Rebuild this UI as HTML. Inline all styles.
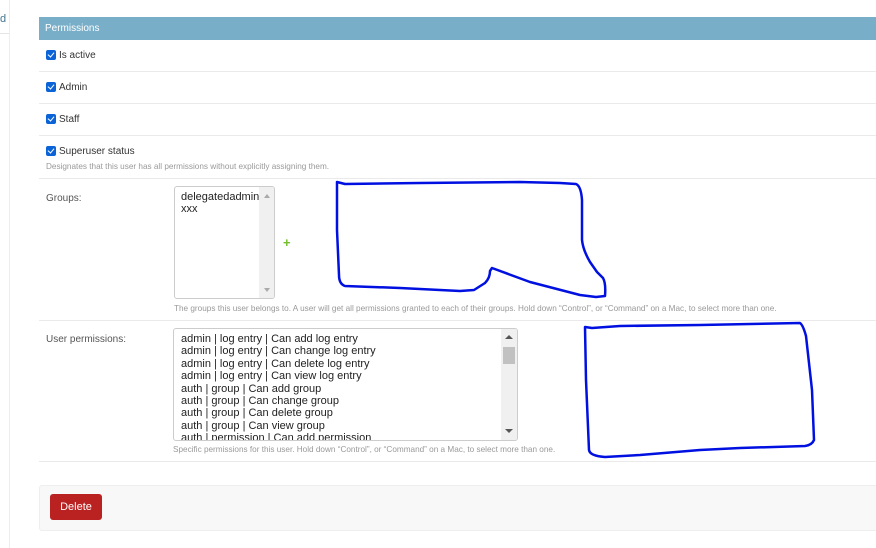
<!DOCTYPE html>
<html><head><meta charset="utf-8"><style>
body{margin:0;width:876px;height:548px;background:#fff;font-family:"Liberation Sans",Arial,sans-serif;position:relative;overflow:hidden;color:#333}
.a{position:absolute}
.t{font-size:11px;color:#333}
.h{font-size:8.2px;color:#999;white-space:nowrap}
.line{position:absolute;left:39px;right:0;height:1px;background:#eaeaea}
.cb{position:absolute;width:10px;height:10px;background:#0b63d8;border-radius:2px}
.cb:after{content:"";position:absolute;left:3px;top:1px;width:3px;height:5px;border:solid #fff;border-width:0 1.5px 1.5px 0;transform:rotate(40deg)}
.opt{font-size:11px;line-height:12.4px;color:#222;white-space:nowrap}
</style></head><body>
<div class="a" style="left:0;top:0;width:9px;height:548px;border-right:1px solid #eee"></div>
<div class="a" style="left:0;top:33px;width:9px;height:1px;background:#e5e5e5"></div>
<div class="a t" style="left:0;top:13px;color:#417690">d</div>

<div class="a" style="left:39px;top:17px;width:837px;height:23px;background:#79aec8"></div>
<div class="a" style="left:45px;top:23px;font-size:10px;color:#fff">Permissions</div>

<div class="cb" style="left:46px;top:50px"></div><div class="a t" style="left:59px;top:50px;font-size:10px">Is active</div>
<div class="line" style="top:71px"></div>
<div class="cb" style="left:46px;top:82px"></div><div class="a t" style="left:59px;top:82px;font-size:10px">Admin</div>
<div class="line" style="top:103px"></div>
<div class="cb" style="left:46px;top:114px"></div><div class="a t" style="left:59px;top:114px;font-size:10px">Staff</div>
<div class="line" style="top:135px"></div>
<div class="cb" style="left:46px;top:146px"></div><div class="a t" style="left:59px;top:146px;font-size:10px">Superuser status</div>
<div class="a h" style="left:46px;top:162px">Designates that this user has all permissions without explicitly assigning them.</div>
<div class="line" style="top:178px"></div>

<div class="a t" style="left:46px;top:193px;font-size:10px;color:#555">Groups:</div>
<div class="a" style="left:174px;top:186px;width:99px;height:111px;border:1px solid #ccc;border-radius:3px;overflow:hidden">
 <div class="a opt" style="left:6px;top:4px">delegatedadmin<br>xxx</div>
 <div class="a" style="right:0;top:0;width:15px;height:111px;background:#f0f0f0"></div>
 <div class="a" style="right:4px;top:7px;border:3.5px solid transparent;border-bottom:4px solid #aaa;border-top:0"></div>
 <div class="a" style="right:4px;top:101px;border:3.5px solid transparent;border-top:4px solid #aaa;border-bottom:0"></div>
</div>
<div class="a" style="left:283px;top:235px;color:#70bf2b;font-weight:bold;font-size:13px">+</div>
<div class="a h" style="left:174px;top:304px">The groups this user belongs to. A user will get all permissions granted to each of their groups. Hold down “Control”, or “Command” on a Mac, to select more than one.</div>
<div class="line" style="top:320px"></div>

<div class="a t" style="left:46px;top:334px;font-size:10px;color:#555">User permissions:</div>
<div class="a" style="left:173px;top:328px;width:343px;height:111px;border:1px solid #ccc;border-radius:3px;overflow:hidden">
 <div class="a opt" style="left:7px;top:4px">admin | log entry | Can add log entry<br>admin | log entry | Can change log entry<br>admin | log entry | Can delete log entry<br>admin | log entry | Can view log entry<br>auth | group | Can add group<br>auth | group | Can change group<br>auth | group | Can delete group<br>auth | group | Can view group<br>auth | permission | Can add permission</div>
 <div class="a" style="right:0;top:0;width:16px;height:111px;background:#f0f0f0"></div>
 <div class="a" style="right:2px;top:18px;width:12px;height:17px;background:#c1c1c1"></div>
 <div class="a" style="right:4px;top:6px;border:4px solid transparent;border-bottom:4px solid #555;border-top:0"></div>
 <div class="a" style="right:4px;top:100px;border:4px solid transparent;border-top:4px solid #555;border-bottom:0"></div>
</div>
<div class="a h" style="left:173px;top:445px">Specific permissions for this user. Hold down “Control”, or “Command” on a Mac, to select more than one.</div>
<div class="line" style="top:461px"></div>

<div class="a" style="left:39px;top:485px;width:837px;height:44px;background:#f8f8f8;border:1px solid #eee;border-radius:3px"></div>
<div class="a" style="left:50px;top:494px;width:52px;height:26px;background:#ba2121;border-radius:3px;color:#fff;font-size:11px;text-align:center;line-height:26px">Delete</div>

<svg class="a" style="left:0;top:0" width="876" height="548" fill="none" stroke="#0010e0" stroke-width="2.5" stroke-linejoin="round" stroke-linecap="round">
<path d="M337 182 L345 184 L420 183 L520 182 L560 183 L576 184 Q581 186 582 200 L582 240 Q583 250 590 262 L597 272 L603 278 Q606 283 605 296 L596 297 L580 295 L530 282 L492 268 L490 271 Q490 278 485 283 L474 290 L460 291 L400 288 L345 286 Q339 284 339 275 L337 230 Z"/>
<path d="M585 327 L592 328 L620 326 L700 325 L800 323 Q803 325 806 336 L812 390 L814 440 Q812 445 805 446 L740 448 L700 450 L640 455 L605 457 Q590 456 589 450 L586 380 Z"/>
</svg>
</body></html>
